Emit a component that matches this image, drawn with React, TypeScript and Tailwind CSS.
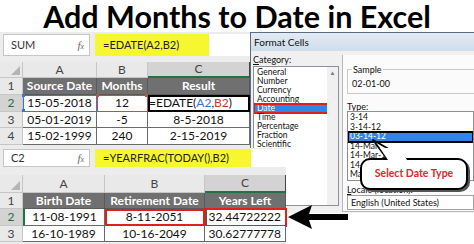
import React from 'react';

const SHEET1 = [23, 74, 51, 102];
const SHEET2 = [23, 82, 100, 81];

const DATE_CATS = ['General', 'Number', 'Currency', 'Accounting', 'Date', 'Time', 'Percentage', 'Fraction', 'Scientific'];
const DATE_TYPES = ['3-14', '3-14-12', '03-14-12', '14-Mar', '14-Mar-12', '14-Mar-2012', 'Mar-12'];

function Corner() {
  return (
    <div className="relative h-full w-full bg-[#e9e9e9] border-r border-b border-[#c6c6c6]">
      <svg className="absolute right-[2px] bottom-[2px]" width="9" height="9" viewBox="0 0 9 9">
        <polygon points="9,0 9,9 0,9" fill="#b5b5b5" />
      </svg>
    </div>
  );
}

function FormulaBar({ name, formula, yellowW, top, bottom, h }: { name: string; formula: string; yellowW: number; top: number; bottom: number; h: number }) {
  return (
    <div className="flex bg-[#ececec]" style={{ paddingTop: top, paddingBottom: bottom }}>
      <div className="ml-[3px] w-[87px] flex items-center justify-between bg-white border border-[#c6c6c6] pl-[7px] pr-[5px] text-[11px] text-[#333]" style={{ height: h }}>
        <span>{name}</span>
        <span className="font-['Liberation_Serif',serif] italic text-[11px] text-[#666]">f<span className="text-[8px]">x</span></span>
      </div>
      <div className="w-[5px]" />
      <div className="flex items-center bg-[#f7f72f] pl-[8px] text-[11px] text-[#222]" style={{ width: yellowW, height: h }}>
        {formula}
      </div>
      <div className="flex-1 bg-white" style={{ height: h }} />
    </div>
  );
}

function ColHeaders({ widths, active, h }: { widths: number[]; active: number; h: number }) {
  return (
    <div className="flex" style={{ height: h }}>
      <div style={{ width: widths[0] }}><Corner /></div>
      {['A', 'B', 'C'].map((l, i) => (
        <div
          key={l}
          className={`flex items-center justify-center border-r border-b text-[12px] ${i + 1 === active ? 'bg-[#d3d3d3] border-b-[#217346] border-b-2 text-[#444]' : 'bg-[#e9e9e9] border-[#c6c6c6] text-[#444]'}`}
          style={{ width: widths[i + 1] }}
        >
          {l}
        </div>
      ))}
    </div>
  );
}

function RowNum({ n, w, active }: { n: number; w: number; active?: boolean }) {
  return (
    <div
      className={`flex items-center justify-center border-r border-b border-[#c6c6c6] text-[12px] ${active ? 'bg-[#d3d3d3] text-[#2e6b3e]' : 'bg-[#e9e9e9] text-[#444]'}`}
      style={{ width: w }}
    >
      {n}
    </div>
  );
}

function HeaderRow({ widths, labels, h }: { widths: number[]; labels: string[]; h: number }) {
  return (
    <div className="flex" style={{ height: h }}>
      <RowNum n={1} w={widths[0]} />
      {labels.map((l, i) => (
        <div key={l} className="flex items-center justify-center bg-[#707070] border-r border-b border-[#5a5a5a] text-white font-bold text-[12px]" style={{ width: widths[i + 1] }}>
          {l}
        </div>
      ))}
    </div>
  );
}

function DataCell({ w, children, cls = '' }: { w: number; children: React.ReactNode; cls?: string }) {
  return (
    <div className={`relative flex items-center justify-center bg-white border-r border-b border-[#6a6a6a] text-[12px] text-[#111] ${cls}`} style={{ width: w }}>
      {children}
    </div>
  );
}

function TopSheet() {
  const w = SHEET1;
  const rows = [
    ['05-01-2019', '-5', '8-5-2018'],
    ['15-02-1999', '240', '2-15-2019'],
  ];
  return (
    <div className="flex flex-col w-[250px] bg-[#ececec]">
      <FormulaBar name="SUM" formula="=EDATE(A2,B2)" yellowW={114} top={2} bottom={6} h={22} />
      <ColHeaders widths={w} active={3} h={16} />
      <HeaderRow widths={w} labels={['Source Date', 'Months', 'Result']} h={17} />
      <div className="flex h-[17px]">
        <RowNum n={2} w={w[0]} active />
        <DataCell w={w[1]} cls="outline outline-1 outline-[#4472c4] -outline-offset-1 z-10">
          15-05-2018
          <span className="absolute -left-[1px] -top-[1px] w-[3px] h-[3px] bg-[#4472c4]" />
          <span className="absolute -left-[1px] -bottom-[1px] w-[3px] h-[3px] bg-[#4472c4]" />
        </DataCell>
        <DataCell w={w[2]} cls="bg-[#fbe3e3] outline outline-1 outline-[#c0504d] -outline-offset-1 z-10">
          12
          <span className="absolute -left-[1px] -top-[1px] w-[3px] h-[3px] bg-[#c0504d]" />
          <span className="absolute -right-[1px] -top-[1px] w-[3px] h-[3px] bg-[#c0504d]" />
        </DataCell>
        <DataCell w={w[3]} cls="justify-start pl-[1px] outline outline-2 outline-black -outline-offset-2">
          <span>=EDATE(<span className="text-[#3f6fc8]">A2</span>,<span className="text-[#c0392b]">B2</span>)</span>
        </DataCell>
      </div>
      {rows.map((r, i) => (
        <div key={i} className={`flex ${i === 0 ? 'h-[16px]' : 'h-[17px]'}`}>
          <RowNum n={i + 3} w={w[0]} />
          {r.map((c, j) => (
            <DataCell key={j} w={w[j + 1]}>{c}</DataCell>
          ))}
        </div>
      ))}
      <div className="h-[3px]" />
    </div>
  );
}

function BottomSheet() {
  const w = SHEET2;
  return (
    <div className="flex flex-col w-[286px] bg-[#ececec] relative z-10">
      <FormulaBar name="C2" formula="=YEARFRAC(TODAY(),B2)" yellowW={156} top={1} bottom={8} h={18} />
      <ColHeaders widths={w} active={3} h={18} />
      <HeaderRow widths={w} labels={['Birth Date', 'Retirement Date', 'Years Left']} h={16} />
      <div className="flex h-[17px]">
        <RowNum n={2} w={w[0]} active />
        <DataCell w={w[1]} cls="border-l-2 border-l-[#217346]">11-08-1991</DataCell>
        <DataCell w={w[2]} cls="outline outline-2 outline-[#e0201c] -outline-offset-2">8-11-2051</DataCell>
        <DataCell w={w[3]} cls="justify-end pr-[4px] border-l-2 border-l-[#217346] outline outline-2 outline-[#e0201c] -outline-offset-1">32.44722222</DataCell>
      </div>
      <div className="flex h-[16px]">
        <RowNum n={3} w={w[0]} />
        <DataCell w={w[1]}>16-10-1989</DataCell>
        <DataCell w={w[2]}>10-16-2049</DataCell>
        <DataCell w={w[3]} cls="justify-end pr-[4px]">30.62777778</DataCell>
      </div>
      <div className="h-[2px]" />
    </div>
  );
}

function Dialog() {
  return (
    <div className="flex-1 h-[181px] flex flex-col bg-[#f0f0f0] border-l border-t border-[#5b6b80] font-['Lato',sans-serif] text-[9px] text-[#111] leading-none">
      <div className="h-[20px] flex items-center pl-[3px] bg-gradient-to-b from-[#e3ebf4] to-[#cfdcea] text-[10px]">Format Cells</div>
      <div className="flex-1 flex">
        <div className="w-[91px] flex flex-col pl-[2px] pt-[4px]">
          <div className="h-[10px]"><span className="underline">C</span>ategory:</div>
          <div className="mt-[1px] w-[86px] h-[140px] flex bg-white border border-[#8a8f98] overflow-hidden">
            <div className="flex-1 flex flex-col pt-[1px] text-[8.5px]">
              {DATE_CATS.map((c) => (
                <div
                  key={c}
                  className={`h-[9px] leading-[9px] pl-[3px] overflow-hidden ${c === 'Date' ? 'bg-[#2f86e8] text-white outline outline-2 outline-[#e0201c] -outline-offset-1 mr-[-1px]' : ''}`}
                >
                  {c}
                </div>
              ))}
            </div>
            <div className="w-[11px] bg-[#f0f0f0] flex justify-center pt-[3px] text-[6px] text-[#777]">▲</div>
          </div>
        </div>
        <div className="flex-1 flex flex-col border-l border-b border-[#b8b8b8] bg-[#fbfbfb] pl-[4px] pt-[14px] mb-[1px] h-[157px] mt-[4px]">
          <div className="relative h-[25px] border-l border-t border-b border-[#c9c9c9] flex items-end pb-[5px] pl-[4px]">
            <span className="absolute -top-[5px] left-[4px] px-[1px] bg-[#fbfbfb]">Sample</span>
            02-01-00
          </div>
          <div className="mt-[8px] h-[8px]"><span className="underline">T</span>ype:</div>
          <div className="mt-[1px] h-[70px] bg-white border border-[#8a8f98] pt-[1px] overflow-hidden text-[8.5px]">
            {DATE_TYPES.map((t) => (
              <div
                key={t}
                className={`h-[9.5px] leading-[9.5px] pl-[2px] ${t === '03-14-12' ? 'bg-[#2f86e8] text-white outline outline-2 outline-black -outline-offset-1' : ''}`}
              >
                {t}
              </div>
            ))}
          </div>
          <div className="mt-[4px] h-[9px]"><span className="underline">L</span>ocale (location):</div>
          <div className="mt-[1px] h-[15px] flex items-center pl-[3px] bg-white border border-[#a0a0a0]">English (United States)</div>
        </div>
      </div>
    </div>
  );
}

export default function App() {
  return (
    <div className="relative w-[474px] h-[244px] overflow-hidden bg-white font-['Lato','Open_Sans',sans-serif]">
      <h1 className="h-[32px] text-center text-[30.5px] leading-[32px] font-bold text-black">Add Months to Date in Excel</h1>
      <div className="flex">
        <div className="w-[250px] flex flex-col relative z-10">
          <TopSheet />
          <BottomSheet />
        </div>
        <Dialog />
      </div>

      {/* callout */}
      <svg className="absolute left-[360px] top-[138px] z-20" width="60" height="24" viewBox="0 0 60 24">
        <polygon points="13,2 28,22 48,22" fill="white" stroke="black" strokeWidth="1.8" strokeLinejoin="round" />
      </svg>
      <div className="absolute left-[360px] top-[158px] w-[108px] h-[32px] z-20 rounded-[10px] border-2 border-black bg-white shadow-[2px_2px_0_#555] flex items-center justify-center text-[10.5px] font-bold text-[#e3262b]">
        Select Date Type
      </div>
      <svg className="absolute left-[360px] top-[148px] z-30" width="60" height="14" viewBox="0 0 60 14">
        <polygon points="20,0 28,12 47,12 40,0" fill="white" />
      </svg>

      {/* arrow */}
      <svg className="absolute left-[286px] top-[203px] z-20" width="66" height="28" viewBox="0 0 66 28">
        <polygon points="2,14 26,2 23,11 62,11 62,17 23,17 26,26" fill="black" />
      </svg>
    </div>
  );
}
